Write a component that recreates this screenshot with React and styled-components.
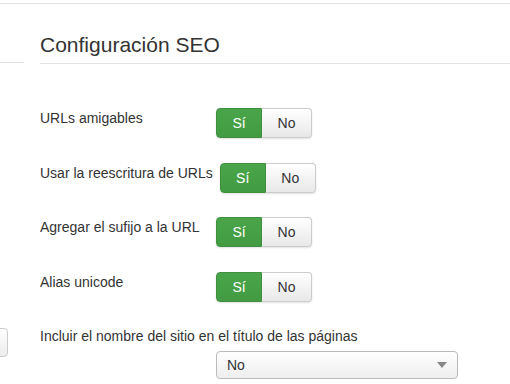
import styled, { createGlobalStyle } from 'styled-components';

const GlobalStyle = createGlobalStyle`
  body {
    margin: 0;
    background: #fff;
    font-family: "Liberation Sans", Arial, sans-serif;
    color: #333;
    overflow: hidden;
  }
`;

const Page = styled.div`
  width: 510px;
  height: 384px;
  padding-top: 3px;
  box-sizing: border-box;
  overflow: hidden;
`;

const Columns = styled.div`
  display: flex;
  border-top: 1px solid #e3e3e3;
`;

const Sidebar = styled.div`
  flex: 0 0 24px;
  display: flex;
  flex-direction: column;
`;

const SidebarHead = styled.div`
  height: 58px;
  border-bottom: 1px solid #e3e3e3;
`;

const SideButton = styled.div`
  margin-top: 265px;
  margin-left: -30px;
  width: 36px;
  height: 27px;
  border: 1px solid #ccc;
  border-radius: 4px;
  background: linear-gradient(#fff, #ececec);
`;

const Content = styled.div`
  flex: 1;
  margin-left: 16px;
`;

const Title = styled.h2`
  margin: 1px 0 0;
  height: 59px;
  box-sizing: border-box;
  padding-top: 28px;
  font-size: 21px;
  font-weight: normal;
  line-height: 24px;
  border-bottom: 1px solid #e3e3e3;
`;

const Form = styled.div`
  padding-top: 44px;
  display: flex;
  flex-direction: column;
`;

const Row = styled.div`
  display: flex;
  align-items: flex-start;
  height: 54.5px;
`;

const Label = styled.div`
  flex: 0 0 auto;
  min-width: 176px;
  box-sizing: border-box;
  padding-right: 7px;
  padding-top: 1px;
  font-size: 14px;
  line-height: 18px;
`;

const Toggle = styled.div`
  display: flex;
  height: 30px;
  border-radius: 4px;
  box-shadow: 0 1px 2px rgba(0, 0, 0, 0.12);
`;

const ToggleBtn = styled.div`
  display: flex;
  align-items: center;
  justify-content: center;
  width: ${(p) => (p.$on ? 46 : 50)}px;
  box-sizing: border-box;
  font-size: 14px;
  border: 1px solid ${(p) => (p.$on ? '#3e8f3e' : '#ccc')};
  border-radius: ${(p) => (p.$on ? '4px 0 0 4px' : '0 4px 4px 0')};
  border-left: ${(p) => (p.$on ? '' : 'none')};
  color: ${(p) => (p.$on ? '#fff' : '#333')};
  background: ${(p) =>
    p.$on
      ? 'linear-gradient(#4aa54a, #429b42)'
      : 'linear-gradient(#fff, #e8e8e8)'};
`;

const Block = styled.div`
  display: flex;
  flex-direction: column;
  gap: 6px;
`;

const Select = styled.div`
  margin-left: 176px;
  width: 242px;
  height: 28px;
  box-sizing: border-box;
  display: flex;
  align-items: center;
  justify-content: space-between;
  padding: 0 10px;
  border: 1px solid #bbb;
  border-radius: 4px;
  background: linear-gradient(#fff, #eee);
  font-size: 14px;
`;

const Caret = styled.span`
  width: 0;
  height: 0;
  border-left: 5px solid transparent;
  border-right: 5px solid transparent;
  border-top: 6px solid #888;
`;

const switches = [
  'URLs amigables',
  'Usar la reescritura de URLs',
  'Agregar el sufijo a la URL',
  'Alias unicode',
];

export default function App() {
  return (
    <Page>
      <GlobalStyle />
      <Columns>
        <Sidebar>
          <SidebarHead />
          <SideButton />
        </Sidebar>
        <Content>
          <Title>Configuración SEO</Title>
          <Form>
            {switches.map((s) => (
              <Row key={s}>
                <Label>{s}</Label>
                <Toggle>
                  <ToggleBtn $on>Sí</ToggleBtn>
                  <ToggleBtn>No</ToggleBtn>
                </Toggle>
              </Row>
            ))}
            <Block>
              <Label>Incluir el nombre del sitio en el título de las páginas</Label>
              <Select>
                <span>No</span>
                <Caret />
              </Select>
            </Block>
          </Form>
        </Content>
      </Columns>
    </Page>
  );
}
